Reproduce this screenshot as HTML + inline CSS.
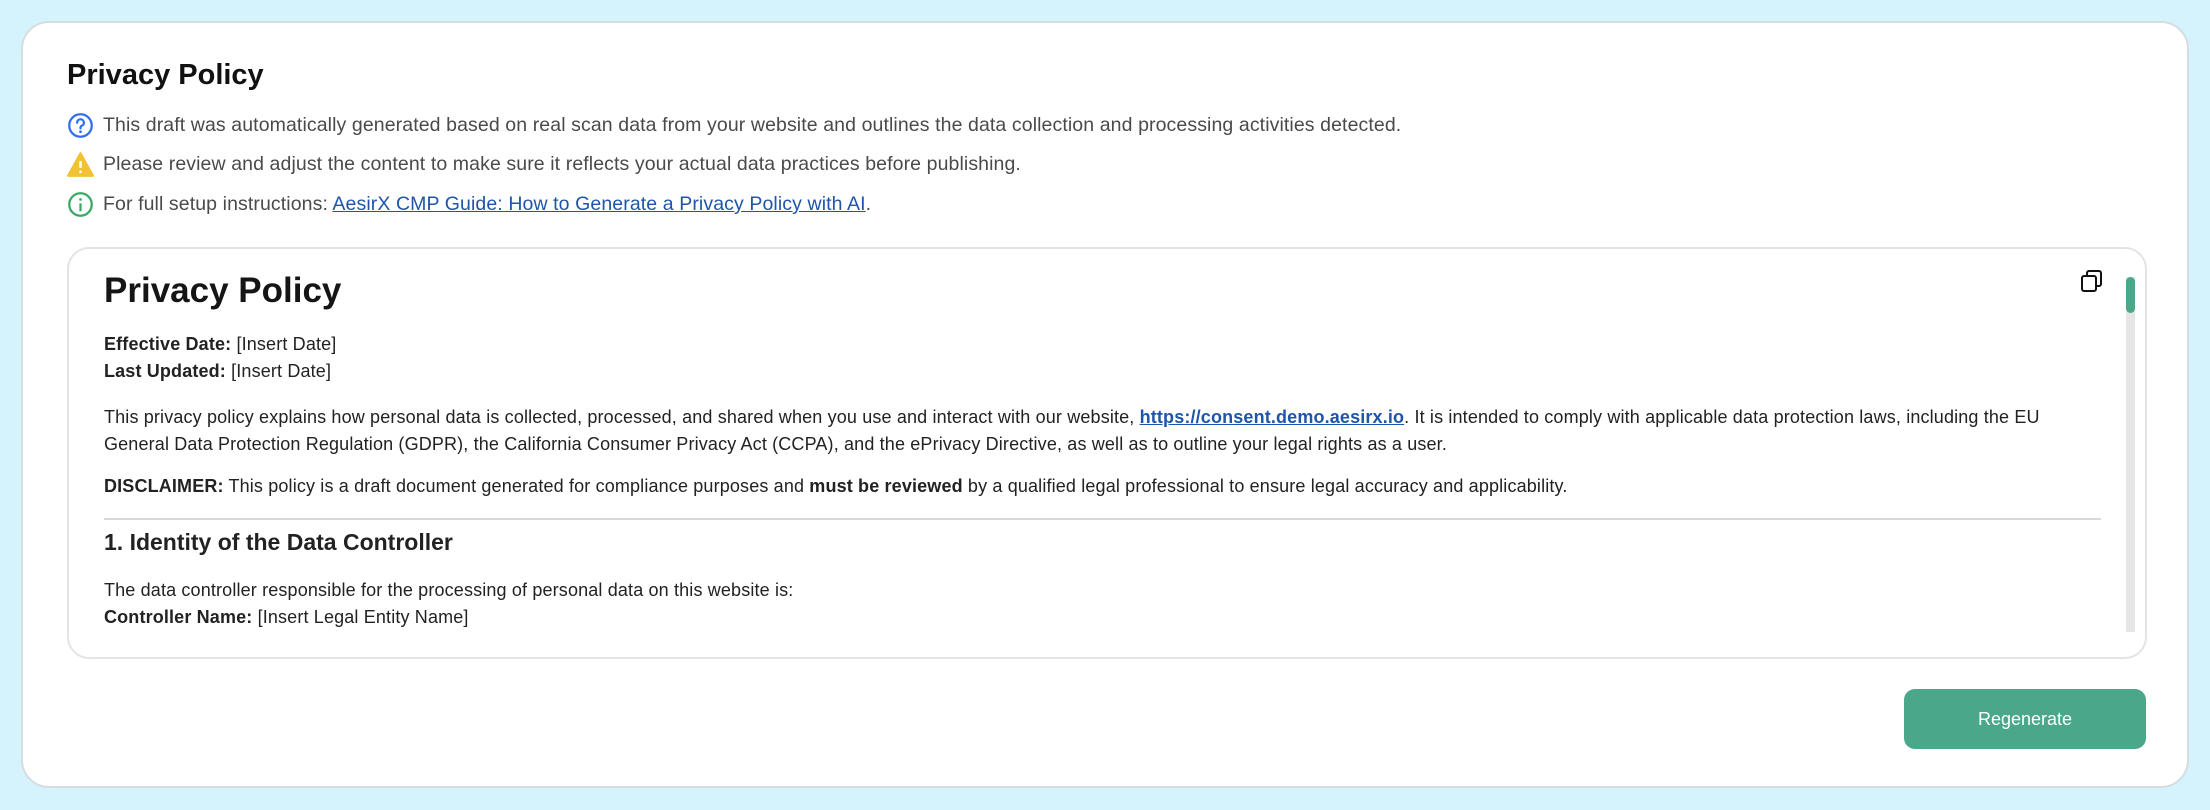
<!DOCTYPE html>
<html><head><meta charset="utf-8"><style>
*{box-sizing:border-box;margin:0;padding:0}
body{width:2210px;height:810px;background:#d5f3fd;font-family:"Liberation Sans",Arial,sans-serif;position:relative;overflow:hidden}
.card{position:absolute;left:21px;top:21px;width:2168px;height:767px;background:#fff;border:2px solid #d6dde0;border-radius:28px}
h1{position:absolute;left:44px;top:36px;font-size:29px;font-weight:bold;color:#111}
.info{position:absolute;left:44px;font-size:19.5px;color:#4a4a4a;display:flex;align-items:center;gap:9px;letter-spacing:0.1px}
.info svg{width:27px;height:27px}
a{color:#1f55a8;text-decoration:underline}
.box{position:absolute;left:44px;top:224px;width:2080px;height:412px;border:2px solid #e4e4e4;border-radius:22px;overflow:hidden}
.content{position:absolute;left:35px;top:0;width:2000px;color:#222;font-size:18px;line-height:27px;letter-spacing:0.15px}
.content h2{font-size:35px;font-weight:bold;position:absolute;top:28px;color:#151515;letter-spacing:0}
.sb{position:absolute;left:2057px;top:28px;width:9px;height:355px;background:#e6e6e6}
.thumb{position:absolute;left:0;top:0;width:9px;height:36px;background:#4aa88a;border-radius:5px}
.btn{position:absolute;left:1881px;top:666px;width:242px;height:60px;background:#4aa78a;border-radius:11px;color:#fff;font-size:18px;display:flex;align-items:center;justify-content:center}
</style></head><body>
<div class="card">
<h1>Privacy Policy</h1>
<div class="info" style="top:89px"><svg viewBox="0 0 24 24"><circle cx="12" cy="12" r="10" fill="none" stroke="#2f6ff0" stroke-width="2"/><path d="M9 9.5a3 3 0 1 1 4 2.8c-.8.4-1 .9-1 1.7v.6" fill="none" stroke="#2f6ff0" stroke-width="2" stroke-linecap="round"/><circle cx="12" cy="17.5" r="1.2" fill="#2f6ff0"/></svg>This draft was automatically generated based on real scan data from your website and outlines the data collection and processing activities detected.</div>
<div class="info" style="top:128px"><svg viewBox="0 0 24 24"><path d="M12 2L23 22H1Z" fill="#f1c232" stroke="#f1c232" stroke-linejoin="round" stroke-width="2"/><path d="M12 9v6" stroke="#fff" stroke-width="2.2"/><circle cx="12" cy="18.5" r="1.2" fill="#fff"/></svg>Please review and adjust the content to make sure it reflects your actual data practices before publishing.</div>
<div class="info" style="top:168px"><svg viewBox="0 0 24 24"><circle cx="12" cy="12" r="10" fill="none" stroke="#3aa865" stroke-width="2"/><path d="M12 11v7" stroke="#3aa865" stroke-width="2"/><circle cx="12" cy="7.5" r="1.2" fill="#3aa865"/></svg><span>For full setup instructions: <a>AesirX CMP Guide: How to Generate a Privacy Policy with AI</a>.</span></div>
<div class="box">
<div class="content">
<h2>Privacy Policy</h2>
<div style="position:absolute;top:82px"><b>Effective Date:</b> [Insert Date]<br><b>Last Updated:</b> [Insert Date]</div>
<div style="position:absolute;top:155px;width:2000px">This privacy policy explains how personal data is collected, processed, and shared when you use and interact with our website, <a style="font-weight:bold">https://consent.demo.aesirx.io</a>. It is intended to comply with applicable data protection laws, including the EU General Data Protection Regulation (GDPR), the California Consumer Privacy Act (CCPA), and the ePrivacy Directive, as well as to outline your legal rights as a user.</div>
<div style="position:absolute;top:224px;width:2000px"><b>DISCLAIMER:</b> This policy is a draft document generated for compliance purposes and <b>must be reviewed</b> by a qualified legal professional to ensure legal accuracy and applicability.</div>
<div style="position:absolute;top:269px;width:1997px;height:2px;background:#d8d8d8"></div>
<div style="position:absolute;top:278px;font-size:23px;font-weight:bold;line-height:30px;letter-spacing:0">1. Identity of the Data Controller</div>
<div style="position:absolute;top:328px;white-space:nowrap">The data controller responsible for the processing of personal data on this website is:<br><b>Controller Name:</b> [Insert Legal Entity Name]<br>&nbsp;</div>
</div>
<svg style="position:absolute;left:2011px;top:20px" width="24" height="24" viewBox="0 0 24 24" fill="none" stroke="#111" stroke-width="2"><rect x="2" y="7" width="14" height="15" rx="2"/><path d="M7 7V4a2 2 0 0 1 2-2h10a2 2 0 0 1 2 2v11a2 2 0 0 1-2 2h-3"/></svg>
<div class="sb"><div class="thumb"></div></div>
</div>
<div class="btn">Regenerate</div>
</div>
</body></html>
